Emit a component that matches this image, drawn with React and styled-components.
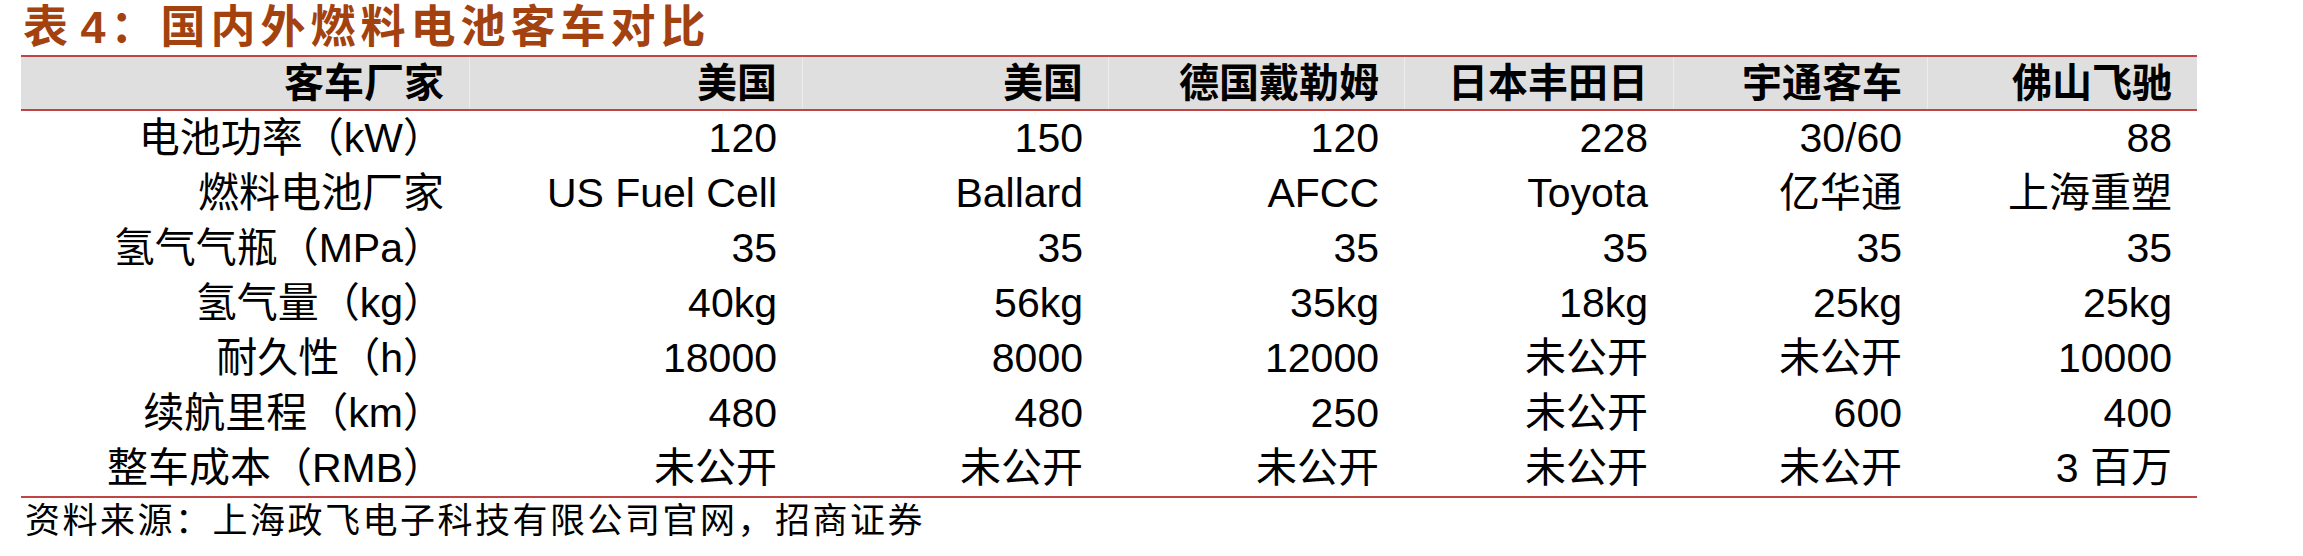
import React from 'react';
import styled, { createGlobalStyle } from 'styled-components';

const columns = '448px 333px 306px 296px 269px 254px 270px';

const header = ['客车厂家', '美国', '美国', '德国戴勒姆', '日本丰田日', '宇通客车', '佛山飞驰'];

const rows = [
  ['电池功率（kW）', '120', '150', '120', '228', '30/60', '88'],
  ['燃料电池厂家', 'US Fuel Cell', 'Ballard', 'AFCC', 'Toyota', '亿华通', '上海重塑'],
  ['氢气气瓶（MPa）', '35', '35', '35', '35', '35', '35'],
  ['氢气量（kg）', '40kg', '56kg', '35kg', '18kg', '25kg', '25kg'],
  ['耐久性（h）', '18000', '8000', '12000', '未公开', '未公开', '10000'],
  ['续航里程（km）', '480', '480', '250', '未公开', '600', '400'],
  ['整车成本（RMB）', '未公开', '未公开', '未公开', '未公开', '未公开', '3 百万'],
];

function App() {
  return (
    <>
      <GlobalStyle />
      <Page>
        <Title>表 4：国内外燃料电池客车对比</Title>
        <Table>
          <HeaderRow>
            {header.map((h, i) => (
              <HeadCell key={i} first={i === 0}>{h}</HeadCell>
            ))}
          </HeaderRow>
          {rows.map((row, r) => (
            <BodyRow key={r} last={r === rows.length - 1}>
              {row.map((c, i) => (
                <Cell key={i}>{c}</Cell>
              ))}
            </BodyRow>
          ))}
        </Table>
        <Source>资料来源：上海政飞电子科技有限公司官网，招商证券</Source>
      </Page>
    </>
  );
}

export default App;

const GlobalStyle = createGlobalStyle`
  html, body {
    margin: 0;
    padding: 0;
    background: #ffffff;
  }
  body {
    font-family: "Liberation Sans", "Noto Sans CJK SC", sans-serif;
    color: #000;
  }
`;

const Page = styled.div`
  width: 2303px;
  height: 556px;
  padding-left: 21px;
  box-sizing: border-box;
  overflow: hidden;
`;

const Title = styled.div`
  height: 55px;
  line-height: 55px;
  padding-left: 2px;
  font-size: 45px;
  font-weight: 700;
  letter-spacing: 5px;
  word-spacing: -10px;
  color: #a3420f;
  white-space: nowrap;
`;

const Table = styled.div`
  width: 2176px;
`;

const HeaderRow = styled.div`
  display: grid;
  grid-template-columns: ${columns};
  height: 56px;
  box-sizing: border-box;
  background: #dfdfdf;
  border-top: 2px solid #c04444;
  border-bottom: 2px solid #c04444;
`;

const HeadCell = styled.div`
  text-align: right;
  padding-right: 25px;
  line-height: 52px;
  font-size: 40px;
  font-weight: 700;
  white-space: nowrap;
  border-left: ${(p) => (p.first ? 'none' : '1px solid #ececec')};
`;

const BodyRow = styled.div`
  display: grid;
  grid-template-columns: ${columns};
  height: ${(p) => (p.last ? '57px' : '55px')};
  box-sizing: border-box;
  border-bottom: ${(p) => (p.last ? '2px solid #c04444' : 'none')};
`;

const Cell = styled.div`
  text-align: right;
  padding-right: 25px;
  line-height: 55px;
  font-size: 41px;
  white-space: nowrap;
`;

const Source = styled.div`
  padding-left: 4px;
  line-height: 46px;
  font-size: 35px;
  letter-spacing: 2.5px;
  white-space: nowrap;
`;
